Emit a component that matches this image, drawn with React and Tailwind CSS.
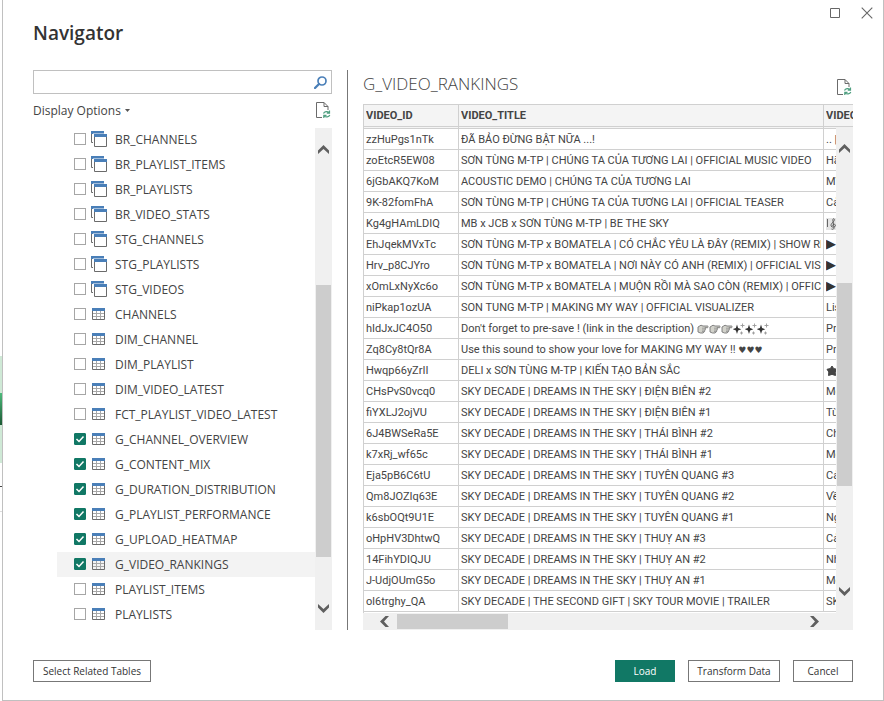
const VIEWS = ["BR_CHANNELS", "BR_PLAYLIST_ITEMS", "BR_PLAYLISTS", "BR_VIDEO_STATS", "STG_CHANNELS", "STG_PLAYLISTS", "STG_VIDEOS"];
const ITEMS = [
  ...VIEWS,
  "CHANNELS", "DIM_CHANNEL", "DIM_PLAYLIST", "DIM_VIDEO_LATEST", "FCT_PLAYLIST_VIDEO_LATEST",
  "G_CHANNEL_OVERVIEW", "G_CONTENT_MIX", "G_DURATION_DISTRIBUTION", "G_PLAYLIST_PERFORMANCE",
  "G_UPLOAD_HEATMAP", "G_VIDEO_RANKINGS", "PLAYLIST_ITEMS", "PLAYLISTS",
];
const SELECTED = "G_VIDEO_RANKINGS";

function Hand() {
  return (
    <svg width="12" height="10" viewBox="0 0 12 10" className="inline-block" aria-hidden="true">
      <path d="M1 3 4 1.200 6 2h4.500c.9.2.9 1.500 0 1.700H8l.5 1.200-.6 1.300-.4 1.500L6 9H3.500L1 8z" fill="#d2d2cb" stroke="#777" strokeWidth=".9" />
      <path d="M5 4.200h3M5 6h2.800M5 7.500h2.300" stroke="#888" strokeWidth=".7" />
    </svg>
  );
}

function Sparkle() {
  return (
    <svg width="12" height="12" viewBox="0 0 12 12" className="inline-block" aria-hidden="true">
      <path d="M4 1.500 5.100 5 8.300 6.200 5.100 7.400 4 11 2.900 7.400-.3 6.200 2.900 5z" fill="#333" />
      <path d="M9.500.5v4M7.500 2.500h4M8.500 8.500v3M7 10h3" stroke="#999" strokeWidth=".9" />
    </svg>
  );
}

function Score() {
  return (
    <svg width="14" height="14" viewBox="0 0 14 14" className="inline-block" aria-hidden="true">
      <path d="M0 1h14v12H0z" fill="#e4e4e4" />
      <path d="M1.500 2v8" stroke="#666" />
      <path d="M5.500 12c1.500.8 2.800-.2 2.500-1.500L6.800 3c0-2 2.200-1.500 1.500.3C7.500 5.500 4.500 6.500 5 9c.5 1.700 4.500 1.500 4.500-.5 0-1.700-3-1.700-3 .2" fill="none" stroke="#555" strokeWidth=".9" />
    </svg>
  );
}

function Symbol({ children }) {
  return <span className="font-['DejaVu_Sans',sans-serif] text-[13px] leading-5 text-[#333]">{children}</span>;
}

function Star() {
  return (
    <svg width="12" height="12" viewBox="0 0 12 12" className="inline-block" aria-hidden="true">
      <path d="M6 1 7.700 3.600 11 4.300 9.200 7 9.500 10.500 6 9.400 2.500 10.500 2.800 7 1 4.300 4.300 3.600z" fill="#444" stroke="#444" strokeLinejoin="round" />
    </svg>
  );
}

const ROWS = [
  ["zzHuPgs1nTk", "ĐÃ BẢO ĐỪNG BẬT NỮA ...!", ".. |"],
  ["zoEtcR5EW08", "SƠN TÙNG M-TP | CHÚNG TA CỦA TƯƠNG LAI | OFFICIAL MUSIC VIDEO", "Hãy"],
  ["6jGbAKQ7KoM", "ACOUSTIC DEMO | CHÚNG TA CỦA TƯƠNG LAI", "MV"],
  ["9K-82fomFhA", "SƠN TÙNG M-TP | CHÚNG TA CỦA TƯƠNG LAI | OFFICIAL TEASER", "Cảm"],
  ["Kg4gHAmLDIQ", "MB x JCB x SƠN TÙNG M-TP | BE THE SKY", <Score key="s" />],
  ["EhJqekMVxTc", "SƠN TÙNG M-TP x BOMATELA | CÓ CHẮC YÊU LÀ ĐÂY (REMIX) | SHOW RECAP", <Symbol key="s">▶</Symbol>],
  ["Hrv_p8CJYro", "SƠN TÙNG M-TP x BOMATELA | NƠI NÀY CÓ ANH (REMIX) | OFFICIAL VISUALIZER", <Symbol key="s">▶</Symbol>],
  ["xOmLxNyXc6o", "SƠN TÙNG M-TP x BOMATELA | MUỘN RỒI MÀ SAO CÒN (REMIX) | OFFICIAL", <Symbol key="s">▶</Symbol>],
  ["niPkap1ozUA", "SON TUNG M-TP | MAKING MY WAY | OFFICIAL VISUALIZER", "Listen"],
  ["hIdJxJC4O50", <>Don't forget to pre-save ! (link in the description) <Hand /><Hand /><Hand /><Sparkle /><Sparkle /><Sparkle /></>, "Pre"],
  ["Zq8Cy8tQr8A", <>Use this sound to show your love for MAKING MY WAY !! <span className="text-[9px]">♥♥♥</span></>, "Pre"],
  ["Hwqp66yZrII", "DELI x SƠN TÙNG M-TP | KIẾN TẠO BẢN SẮC", <Star key="s" />],
  ["CHsPvS0vcq0", "SKY DECADE | DREAMS IN THE SKY | ĐIỆN BIÊN #2", "Mộ"],
  ["fiYXLJ2ojVU", "SKY DECADE | DREAMS IN THE SKY | ĐIỆN BIÊN #1", "Từ"],
  ["6J4BWSeRa5E", "SKY DECADE | DREAMS IN THE SKY | THÁI BÌNH #2", "Chú"],
  ["k7xRj_wf65c", "SKY DECADE | DREAMS IN THE SKY | THÁI BÌNH #1", "Mộ"],
  ["Eja5pB6C6tU", "SKY DECADE | DREAMS IN THE SKY | TUYÊN QUANG #3", "Cảm"],
  ["Qm8JOZIq63E", "SKY DECADE | DREAMS IN THE SKY | TUYÊN QUANG #2", "Về"],
  ["k6sbOQt9U1E", "SKY DECADE | DREAMS IN THE SKY | TUYÊN QUANG #1", "Ngà"],
  ["oHpHV3DhtwQ", "SKY DECADE | DREAMS IN THE SKY | THUỴ AN #3", "Cảm"],
  ["14FihYDIQJU", "SKY DECADE | DREAMS IN THE SKY | THUỴ AN #2", "Nh"],
  ["J-UdjOUmG5o", "SKY DECADE | DREAMS IN THE SKY | THUỴ AN #1", "Mộ"],
  ["ol6trghy_QA", "SKY DECADE | THE SECOND GIFT | SKY TOUR MOVIE | TRAILER", "SKY"],
];

function ViewIcon() {
  return (
    <svg width="16" height="16" viewBox="0 0 16 16" aria-hidden="true">
      <path d="M.5 3v8.500H2" fill="none" stroke="#6b6b6b" />
      <path d="M0 0h13v3H0z" fill="#4a7fb8" />
      <path d="M2 2.500h14V16H2z" fill="#fff" />
      <path d="M3.500 6v9.500h12V6" fill="#fff" stroke="#6b6b6b" />
      <path d="M3 3h13v3H3z" fill="#4a7fb8" />
    </svg>
  );
}

function TableIcon() {
  return (
    <svg width="13" height="12" viewBox="0 0 13 12" aria-hidden="true">
      <path d="M4.500 3v8M8.500 3v8M1 5.500h11M1 8.500h11" stroke="#a8a8a8" />
      <path d="M.5 3v8.500h12V3" fill="none" stroke="#6b6b6b" />
      <path d="M0 0h13v3H0z" fill="#4a7fb8" />
    </svg>
  );
}

function RefreshIcon() {
  return (
    <svg width="15" height="17" viewBox="0 0 15 17" aria-hidden="true">
      <path d="M6 15.500H.5V.5h7.500L12 4.500V8M8 .5v4h4" fill="none" stroke="#6b6b6b" />
      <path d="M7.500 11.500c.8-2 4-2.600 5.700-.8M13.500 8.500v2.700h-2.700M13.800 13c-.8 2-4 2.600-5.700.8M7.800 16v-2.700h2.700" fill="none" stroke="#4f9f80" strokeWidth="1.200" />
    </svg>
  );
}

const TURN = { up: "", down: "rotate-180", left: "-rotate-90", right: "rotate-90" };

function Arrow({ dir }) {
  return (
    <button type="button" aria-label={"Scroll " + dir} className="grid size-[17px] shrink-0 place-items-center">
      <svg width="11" height="9" viewBox="0 0 11 9" className={TURN[dir]} aria-hidden="true">
        <path d="M5.500 0 11 5.500V9L5.500 4 0 9V5.500z" fill="#5f5f5f" />
      </svg>
    </button>
  );
}

function TreeItem({ name }) {
  const on = name.startsWith("G_");
  const isView = VIEWS.includes(name);
  return (
    <li className={"ml-6 pl-[17px] " + (name === SELECTED ? "bg-[#f3f3f3]" : "")}>
      <label className="flex h-[25px] items-center pb-px">
        <span className="grid size-3 shrink-0">
          <input type="checkbox" defaultChecked={on} className="peer col-start-1 row-start-1 size-3 appearance-none border border-[#a6a6a6] bg-white checked:rounded-[1px] checked:border-[#117865] checked:bg-[#117865]" />
          <svg viewBox="0 0 12 12" className="pointer-events-none invisible col-start-1 row-start-1 size-3 peer-checked:visible" aria-hidden="true">
            <path d="M2.500 6 5 8.500 9.500 3.500" fill="none" stroke="#fff" strokeWidth="1.500" />
          </svg>
        </span>
        <span className={"ml-[5px] flex w-4 shrink-0 " + (isView ? "" : "pl-px")}>{isView ? <ViewIcon /> : <TableIcon />}</span>
        <span className="ml-2 text-[12px] leading-[25px] whitespace-nowrap">{name}</span>
      </label>
    </li>
  );
}

const BUTTON = "h-[22px] border text-center text-[10px] leading-5 whitespace-nowrap ";
const HEAD = "h-6 border-b-3 border-[#d0d0d0] bg-[#f4f4f4] px-[2px] leading-5 [border-bottom-style:double] ";
const CELL = "border-r border-b border-[#d0d0d0] px-[2px] leading-[22px] ";
const CLIP = "h-5 overflow-hidden whitespace-nowrap";

export default function App() {
  return (
    <div className="flex min-h-screen bg-white font-['Open_Sans','Noto_Sans',sans-serif] text-[#444]">
      <div className="flex w-[2px] shrink-0 flex-col" aria-hidden="true">
        <div className="mt-[356px] h-[37px] bg-[#cfe9d6]" />
        <div className="h-8 bg-linear-to-b from-[#4dbb7c] to-[#1c5a35]" />
        <div className="h-[38px] bg-[#cfe9d6]" />
        <div className="mt-[23px] h-px bg-[#444]" />
        <div className="mt-6 h-px bg-[#ddd]" />
      </div>
      <div className="flex min-w-0 flex-1 flex-col border-x border-b border-[#c0c0c0] pr-[30px] pb-[18px] pl-[30px]">
        <header className="flex h-[70px] justify-between">
          <h1 className="pt-5 text-[19px] leading-[26px] font-semibold text-[#333]">Navigator</h1>
          <div className="-mr-5 flex h-[26px] items-center gap-5">
            <button type="button" aria-label="Maximize">
              <svg width="12" height="12" viewBox="0 0 12 12"><path d="M1.500 1.500h9v9h-9z" fill="none" stroke="#666" /></svg>
            </button>
            <button type="button" aria-label="Close">
              <svg width="12" height="12" viewBox="0 0 12 12"><path d="m.7.700 10.600 10.600M11.300.700.7 11.300" fill="none" stroke="#666" strokeWidth="1.100" /></svg>
            </button>
          </div>
        </header>

        <main className="flex">
          <section className="flex w-[299px] shrink-0 flex-col">
            <label className="flex h-6 items-center border border-[#c0c0c0] pr-1">
              <input type="text" aria-label="Search" className="h-full min-w-0 flex-1 px-1 text-[12px] outline-none" />
              <svg width="13" height="13" viewBox="0 0 13 13" aria-hidden="true">
                <circle cx="8" cy="5" r="4" fill="none" stroke="#4a7fb8" strokeWidth="1.700" />
                <path d="M5 8 1 12" stroke="#4a7fb8" strokeWidth="2.300" strokeLinecap="round" />
              </svg>
            </label>
            <div className="flex h-[33px] items-center justify-between">
              <button type="button" className="flex items-center gap-1 text-[12px]">
                Display Options
                <svg width="5" height="3" viewBox="0 0 5 3" aria-hidden="true"><path d="M0 0h5L2.500 3z" fill="#555" /></svg>
              </button>
              <button type="button" aria-label="Refresh list" className="pr-px"><RefreshIcon /></button>
            </div>
            <div className="flex">
              <ul className="min-w-0 flex-1 pb-[3px]">
                {ITEMS.map((n) => <TreeItem key={n} name={n} />)}
              </ul>
              <div className="mt-px flex w-[17px] flex-col items-center bg-[#f0f0f0] py-[13px]">
                <Arrow dir="up" />
                <div className="mt-[127px] h-[272px] w-[15px] bg-[#cdcdcd]" />
                <div className="flex-1" />
                <Arrow dir="down" />
              </div>
            </div>
          </section>

          <div className="mx-[15px] w-px shrink-0 bg-[#777]" />

          <section className="flex min-w-0 flex-1 flex-col">
            <div className="flex h-[34px] items-end justify-between">
              <h2 className="pb-[6px] text-[17px] leading-7 font-light">G_VIDEO_RANKINGS</h2>
              <button type="button" aria-label="Refresh preview" className="pr-px pb-2"><RefreshIcon /></button>
            </div>
            <div className="relative flex-1 border-t border-l border-[#d0d0d0]">
              <table className="w-full table-fixed border-separate border-spacing-0 font-[Roboto,'Noto_Sans','DejaVu_Sans',sans-serif] text-[11px]">
                <colgroup><col className="w-[95px]" /><col className="w-[365px]" /><col /></colgroup>
                <thead>
                  <tr className="text-left">
                    <th className={HEAD + "border-r"}><div className={CLIP}>VIDEO_ID</div></th>
                    <th className={HEAD + "border-r"}><div className={CLIP}>VIDEO_TITLE</div></th>
                    <th className={HEAD + "pr-0"}><div className={CLIP}>VIDEO_DESCRIPTION</div></th>
                  </tr>
                </thead>
                <tbody>
                  {ROWS.map(([id, title, desc]) => (
                    <tr key={id} className="h-[21px]">
                      <td className={CELL}><div className={CLIP}>{id}</div></td>
                      <td className={CELL}><div className={CLIP}>{title}</div></td>
                      <td className={CELL}><div className={CLIP}>{desc}</div></td>
                    </tr>
                  ))}
                </tbody>
              </table>
              <div className="absolute top-[22px] right-0 bottom-0 flex w-[17px] flex-col items-center bg-[#f0f0f0] py-[13px]">
                <Arrow dir="up" />
                <div className="mt-[126px] h-[203px] w-[15px] bg-[#cdcdcd]" />
                <div className="flex-1" />
                <Arrow dir="down" />
              </div>
            </div>
            <div className="flex h-[17px] items-center bg-[#f0f0f0] pr-[30px] pl-[13px]">
              <Arrow dir="left" />
              <div className="ml-1 h-[15px] w-[111px] bg-[#cdcdcd]" />
              <div className="flex-1" />
              <Arrow dir="right" />
            </div>
          </section>
        </main>

        <footer className="mt-[30px] flex gap-[13px] text-[#333]">
          <button type="button" className={BUTTON + "mr-auto w-[118px] border-[#777]"}>Select Related Tables</button>
          <button type="button" className={BUTTON + "w-[60px] border-[#117865] bg-[#117865] text-white"}>Load</button>
          <button type="button" className={BUTTON + "w-[92px] border-[#777]"}>Transform Data</button>
          <button type="button" className={BUTTON + "w-[60px] border-[#777]"}>Cancel</button>
        </footer>
      </div>
    </div>
  );
}
